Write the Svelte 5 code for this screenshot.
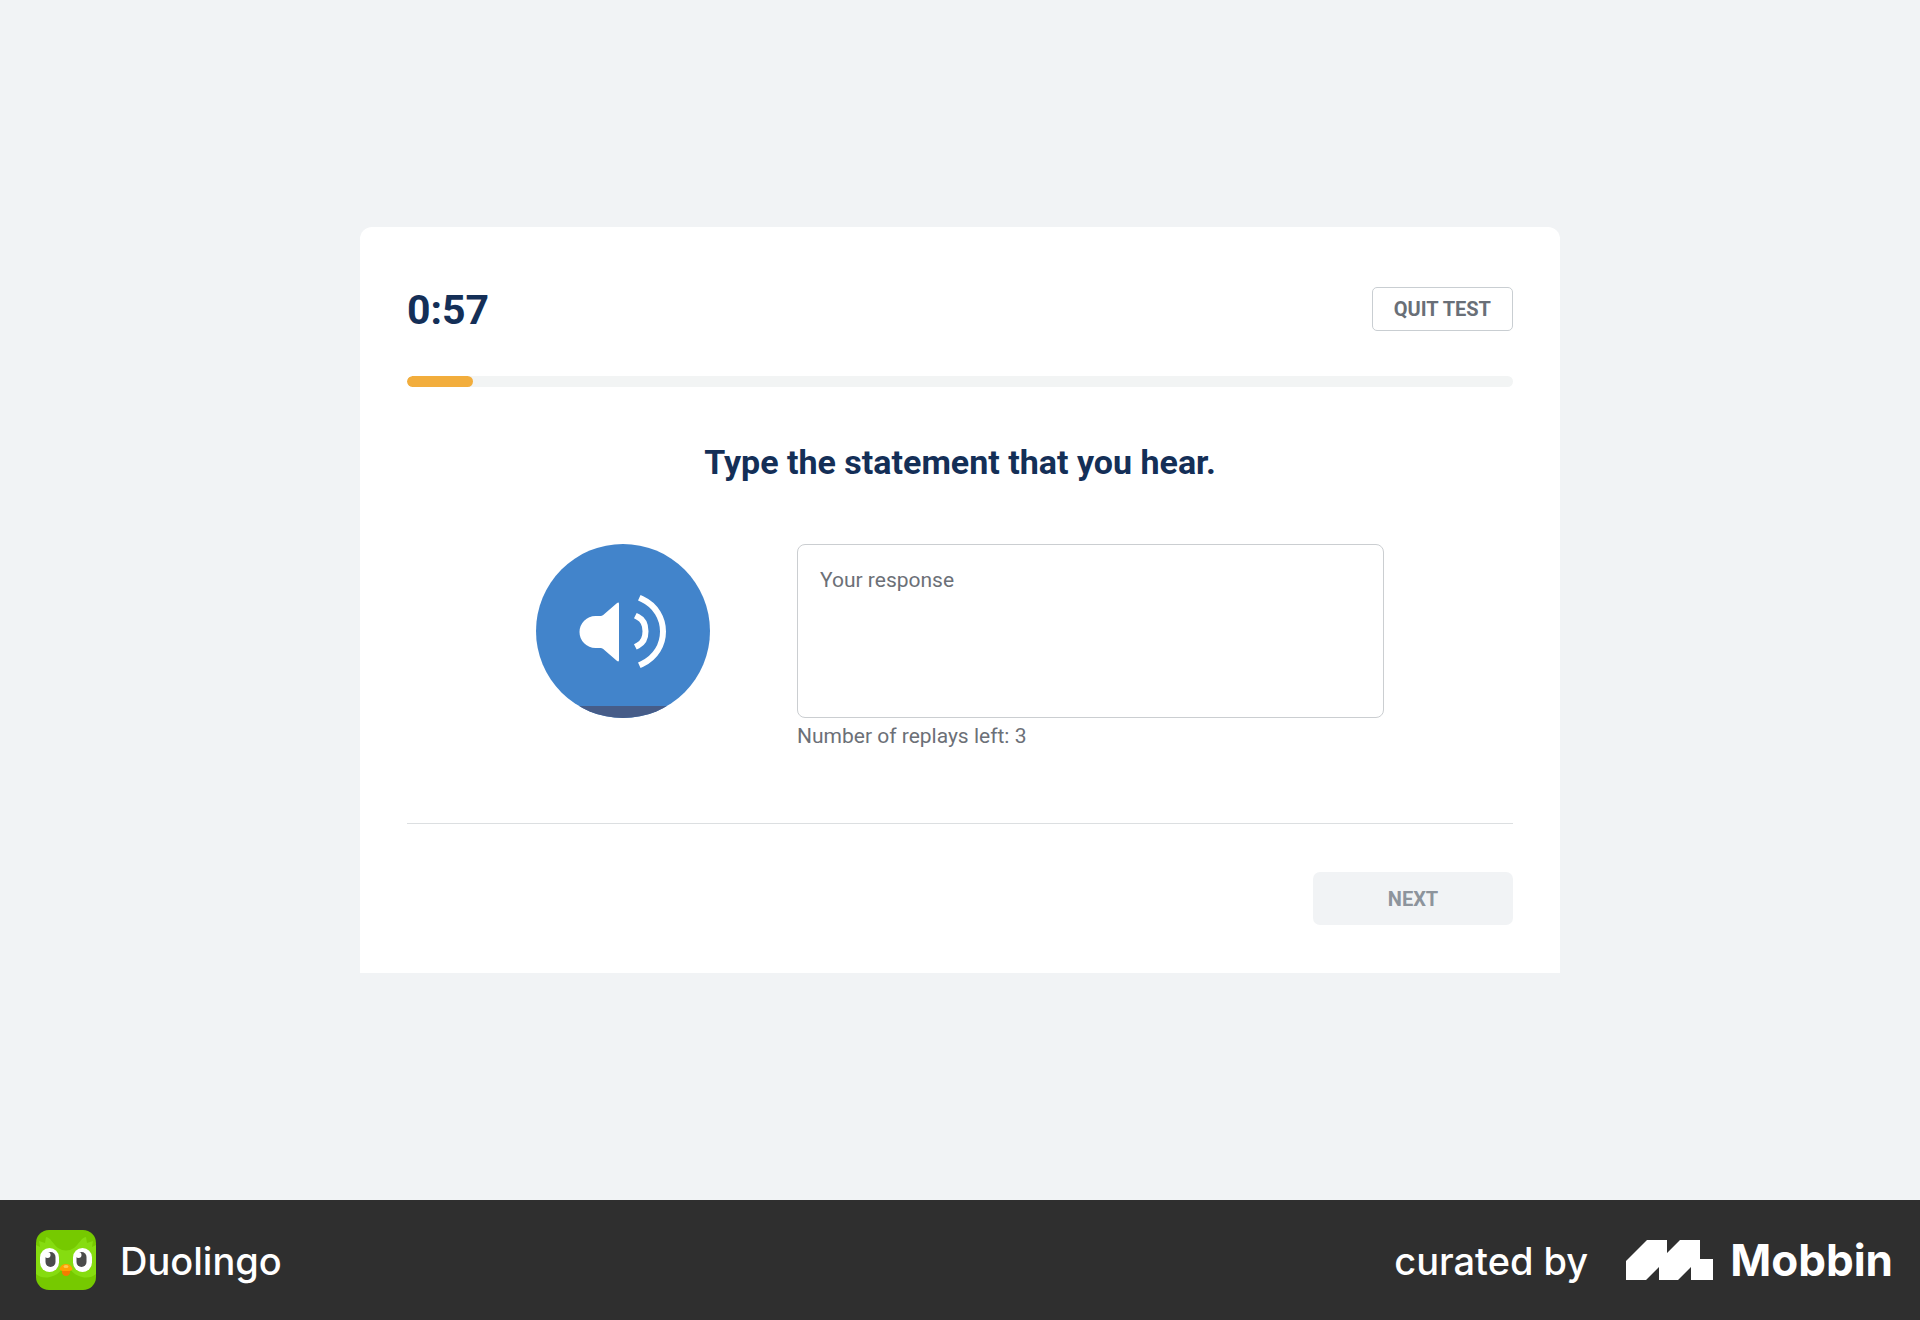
<script lang="ts">
  const progress = 6;
  const replaysLeft = 3;
  let response = $state('');
</script>

<div class="page">
  <main>
    <section class="card">
      <header class="top">
        <div class="timer" role="timer">0:57</div>
        <button class="quit" type="button">QUIT TEST</button>
      </header>

      <div class="track" role="progressbar" aria-label="Time used" aria-valuenow={progress} aria-valuemin="0" aria-valuemax="100">
        <div class="fill" style="width: {progress}%"></div>
      </div>

      <h1>Type the statement that you hear.</h1>

      <div class="exercise">
        <button class="play" type="button" aria-label="Play the statement">
          <svg viewBox="0 0 174 174" aria-hidden="true">
            <clipPath id="disc"><circle cx="87" cy="87" r="87" /></clipPath>
            <g clip-path="url(#disc)">
              <rect width="174" height="174" fill="#4284cb" />
              <rect y="162" width="174" height="12" fill="#465c88" />
            </g>
            <path d="M59.500 72H64.500Q66 72 67.200 70.900L80.800 59.200Q83 57.600 83 60V116Q83 118.400 80.800 116.800L67.200 105.100Q66 104 64.500 104H59.500A16 16 0 0 1 59.500 72Z" fill="#fff" />
            <path d="M102 73C112 78 112 96.500 102 101.500" fill="none" stroke="#fff" stroke-width="6" stroke-linecap="square" />
            <path d="M106 55C134 68 134 107 106 120" fill="none" stroke="#fff" stroke-width="6" stroke-linecap="square" />
          </svg>
        </button>
        <div class="answer">
          <textarea aria-label="Your response" placeholder="Your response" bind:value={response}></textarea>
          <p>Number of replays left: {replaysLeft}</p>
        </div>
      </div>

      <div class="actions">
        <button class="next" type="button" disabled>NEXT</button>
      </div>
    </section>
  </main>

  <footer>
    <div class="brand">
      <svg class="owl" viewBox="0 0 60 60" aria-hidden="true">
        <clipPath id="tile"><rect width="60" height="60" rx="13" /></clipPath>
        <g clip-path="url(#tile)">
          <rect width="60" height="60" fill="#76c900" />
          <path d="M0 15L4 17L3 11L9 13L10 7C15 8 17 14 22 18Q30 23 38 18C43 14 45 8 50 7L51 13L57 11L56 17L60 15V44Q54 49 46 47Q38 45 35 40H25Q22 45 14 47Q6 49 0 44Z" fill="#86dc10" />
          <rect x="4" y="18" width="19" height="24" rx="9.500" fill="#fff" />
          <rect x="37" y="18" width="19" height="24" rx="9.500" fill="#fff" />
          <rect x="9.500" y="22" width="10" height="15" rx="5" fill="#4b4b4b" />
          <rect x="40.500" y="22" width="10" height="15" rx="5" fill="#4b4b4b" />
          <circle cx="11.500" cy="25" r="3" fill="#fff" />
          <circle cx="42.500" cy="25" r="3" fill="#fff" />
          <path d="M26 39H34V43Q33 46 30 46Q27 46 26 43Z" fill="#f47c00" />
          <path d="M23.500 39Q25 34 30 34Q35 34 36.500 39Q36 41 33 41H27Q24 41 23.500 39Z" fill="#ffa200" />
          <ellipse cx="30" cy="36.500" rx="2.500" ry="1.500" fill="#ffc94d" />
        </g>
      </svg>
      <span>Duolingo</span>
    </div>
    <div class="credit">
      <span>curated by</span>
      <svg class="mark" viewBox="0 0 87 40" aria-hidden="true">
        <path d="M0 21L21 0H41V13L54 0H74V19H87V40H65V27L52 40H33V27L20 40H0Z" fill="#fff" />
      </svg>
      <strong>Mobbin</strong>
    </div>
  </footer>
</div>

<style>
  :global(body) { margin: 0; }
  .page {
    min-height: 100vh;
    display: flex;
    flex-direction: column;
    background: #f1f3f5;
    color: #142f57;
    font-family: Roboto, 'Noto Sans', sans-serif;
  }
  button, textarea { font-family: inherit; }
  main {
    flex: 1;
    display: flex;
    align-items: center;
    justify-content: center;
    padding: 24px;
  }
  .card {
    box-sizing: border-box;
    width: 100%;
    max-width: 1200px;
    padding: 60px 47px 48px;
    background: #fff;
    border-radius: 12px 12px 0 0;
  }
  .top {
    display: flex;
    align-items: center;
    justify-content: space-between;
  }
  .timer {
    padding-top: 2px;
    font-size: 41px;
    line-height: 42px;
    font-weight: 700;
  }
  .quit {
    box-sizing: border-box;
    height: 44px;
    padding: 0 21px;
    border: 1px solid #c9ced2;
    border-radius: 5px;
    background: #fff;
    color: #696f77;
    font-size: 20px;
    font-weight: 700;
  }
  .track {
    height: 11px;
    margin-top: 45px;
    border-radius: 6px;
    background: #f2f4f4;
    overflow: hidden;
  }
  .fill {
    height: 100%;
    border-radius: 6px;
    background: #f2ad3c;
  }
  h1 {
    margin: 55px 0 0;
    font-size: 34px;
    line-height: 40px;
    font-weight: 700;
    text-align: center;
  }
  .exercise {
    display: flex;
    justify-content: center;
    align-items: flex-start;
    gap: 87px;
    margin-top: 62px;
  }
  .play {
    flex: none;
    width: 174px;
    height: 174px;
    padding: 0;
    border: 0;
    border-radius: 50%;
    background: none;
  }
  .play svg { display: block; }
  .answer { flex: 0 1 587px; }
  textarea {
    display: block;
    box-sizing: border-box;
    width: 100%;
    height: 174px;
    padding: 23px 22px;
    border: 1px solid #cbced1;
    border-radius: 8px;
    resize: none;
    font-size: 21px;
    line-height: 24px;
  }
  textarea::placeholder { color: #6c7077; opacity: 1; }
  p {
    margin: 6px 0 0;
    color: #6c7077;
    font-size: 21px;
    line-height: 24px;
  }
  .actions {
    display: flex;
    justify-content: flex-end;
    margin-top: 75px;
    padding-top: 48px;
    border-top: 1px solid #dcdfe1;
  }
  .next {
    width: 200px;
    height: 53px;
    border: 0;
    border-radius: 7px;
    background: #f1f3f5;
    color: #8d949c;
    font-size: 20px;
    font-weight: 700;
  }
  footer {
    display: flex;
    align-items: center;
    justify-content: space-between;
    box-sizing: border-box;
    min-height: 120px;
    padding: 0 27px 0 36px;
    background: #2f2f2f;
    color: #fff;
    font-family: Inter, sans-serif;
    font-size: 38px;
    line-height: 48px;
    font-weight: 500;
  }
  .brand, .credit { display: flex; align-items: center; }
  .brand { gap: 24px; }
  .brand span, .credit span { padding-top: 2px; }
  .owl { width: 60px; height: 60px; }
  .mark { width: 87px; height: 40px; margin: 0 17px 0 38px; }
  strong { font-size: 44px; font-weight: 700; }
</style>
